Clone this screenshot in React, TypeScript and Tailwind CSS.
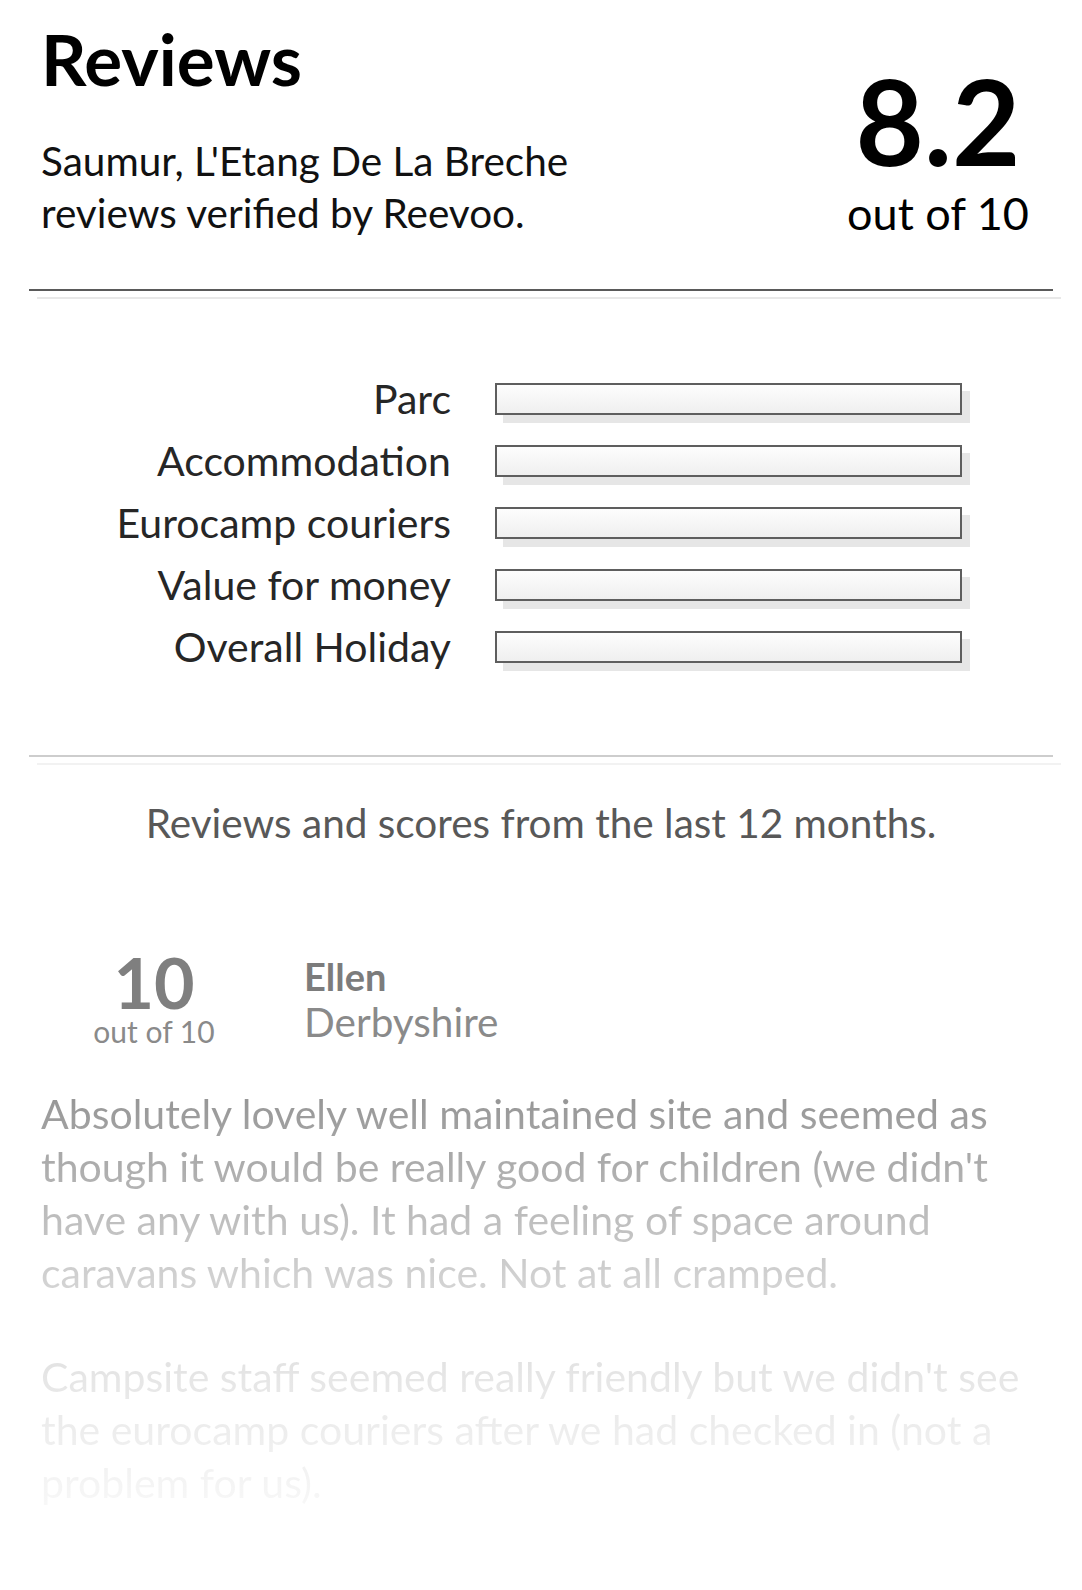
const categories = ["Parc", "Accommodation", "Eurocamp couriers", "Value for money", "Overall Holiday"];

export default function App() {
  return (
    <div className="min-h-[1590px] bg-white px-[41px] pt-[23px] font-[Lato,sans-serif] text-black">
      <header className="flex items-start justify-between">
        <div>
          <h1 className="text-[71px] font-bold leading-[71px]">Reviews</h1>
          <p className="mt-[41px] text-[40.5px] leading-[52px] text-[#111]">
            Saumur, L'Etang De La Breche
            <br />
            reviews verified by Reevoo.
          </p>
        </div>
        <div className="mt-[39px] mr-[3px] w-[200px] whitespace-nowrap text-center">
          <div className="text-[118px] font-bold leading-[118px]">8.2</div>
          <div className="mt-[11px] text-[45px] leading-[45px]">out of 10</div>
        </div>
      </header>

      <div className="-mx-[12px] mt-[50px] h-[2px] bg-[#5a5a5a] shadow-[8px_8px_0_#e8e8e8]" />

      <div className="mt-[92px] flex flex-col gap-[30px]">
        {categories.map((c) => (
          <div key={c} className="flex h-[32px] items-center">
            <span className="w-[410px] whitespace-nowrap text-right text-[41px] leading-[32px] text-[#262626]">{c}</span>
            <div className="ml-[44px] h-[32px] w-[467px] border-2 border-[#5e5e5e] bg-linear-to-b from-[#fdfdfd] to-[#efefef] shadow-[8px_8px_0_#e6e6e6]" />
          </div>
        ))}
      </div>

      <div className="-mx-[12px] mt-[92px] h-[2px] bg-[#cdcdcd] shadow-[8px_8px_0_#f2f2f2]" />

      <p className="mt-[40px] text-center text-[40.5px] leading-[52px] text-[#585858]">
        Reviews and scores from the last 12 months.
      </p>

      <div className="mt-[98px] flex">
        <div className="w-[226px] text-center">
          <div className="text-[70px] font-bold leading-[70px] text-[#7f7f7f]">10</div>
          <div className="whitespace-nowrap text-[30px] leading-[28px] text-[#8a8a8a]">out of 10</div>
        </div>
        <div className="ml-[37px] mt-[6px]">
          <div className="text-[38px] font-bold leading-[46px] text-[#7c7c7c]">Ellen</div>
          <div className="text-[40.5px] leading-[46px] text-[#8a8a8a]">Derbyshire</div>
        </div>
      </div>

      <div className="mt-[42px] bg-[linear-gradient(to_bottom,#939393_0%,#d2d2d2_46%,#e6e6e6_69%,#f8f8f8_100%)] bg-clip-text text-[41px] leading-[53px] text-transparent">
        <p>
          Absolutely lovely well maintained site and seemed as
          <br />
          though it would be really good for children (we didn't
          <br />
          have any with us). It had a feeling of space around
          <br />
          caravans which was nice. Not at all cramped.
        </p>
        <p className="mt-[51px]">
          Campsite staff seemed really friendly but we didn't see
          <br />
          the eurocamp couriers after we had checked in (not a
          <br />
          problem for us).
        </p>
      </div>
    </div>
  );
}
